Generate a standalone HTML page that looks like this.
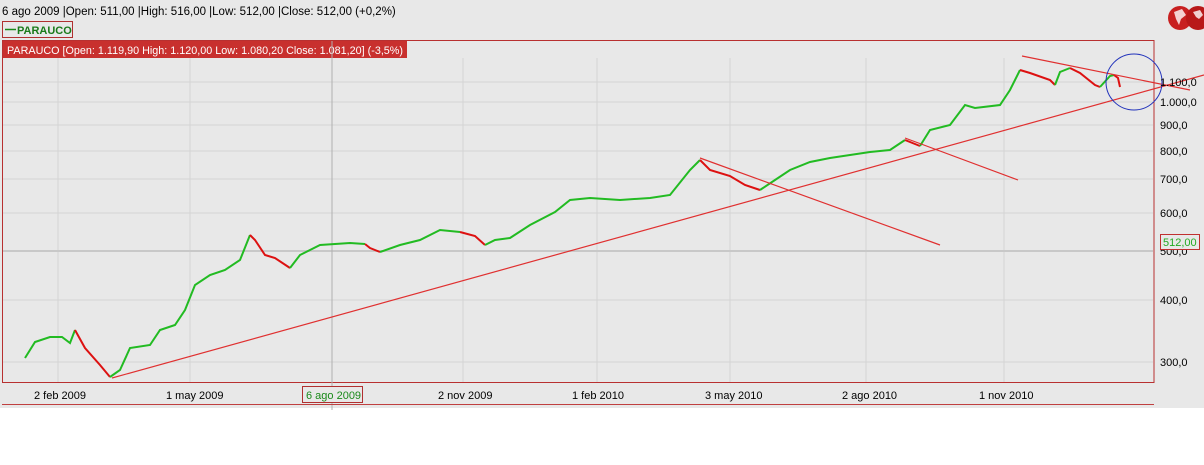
<!DOCTYPE html>
<html><head><style>
body{margin:0;width:1204px;height:460px;background:#fff;overflow:hidden;font-family:"Liberation Sans",sans-serif;}
</style></head><body>
<svg width="1204" height="460" xmlns="http://www.w3.org/2000/svg" font-family="Liberation Sans, sans-serif">
<rect x="0" y="0" width="1204" height="408" fill="#e8e8e8"/>
<text x="2" y="15" font-size="11.5" fill="#000">6 ago 2009 |Open: 511,00 |High: 516,00 |Low: 512,00 |Close: 512,00 (+0,2%)</text>
<rect x="2.5" y="21.5" width="70" height="16" fill="#e8e8e8" stroke="#b03030"/>
<line x1="5" y1="29.5" x2="16" y2="29.5" stroke="#1a8a1a" stroke-width="1.5"/>
<text x="17" y="34" font-size="11" font-weight="bold" fill="#1a7a1a">PARAUCO</text>
<rect x="2.5" y="40.5" width="1151.5" height="342" fill="#e8e8e8" stroke="#b83030"/>
<rect x="3" y="41" width="404" height="17" fill="#c8302e"/>
<text x="7" y="54" font-size="11" fill="#fff" textLength="396" lengthAdjust="spacingAndGlyphs">PARAUCO [Open: 1.119,90  High: 1.120,00  Low: 1.080,20  Close: 1.081,20] (-3,5%)</text>
<g stroke="#d4d4d4" stroke-width="1">
<line x1="58" y1="58" x2="58" y2="382"/><line x1="190" y1="58" x2="190" y2="382"/>
<line x1="463" y1="58" x2="463" y2="382"/><line x1="597" y1="58" x2="597" y2="382"/>
<line x1="730" y1="58" x2="730" y2="382"/><line x1="866" y1="58" x2="866" y2="382"/>
<line x1="1004" y1="58" x2="1004" y2="382"/>
<line x1="3" y1="82" x2="1153" y2="82"/><line x1="3" y1="102" x2="1153" y2="102"/>
<line x1="3" y1="125" x2="1153" y2="125"/><line x1="3" y1="151" x2="1153" y2="151"/>
<line x1="3" y1="179" x2="1153" y2="179"/><line x1="3" y1="213" x2="1153" y2="213"/>
<line x1="3" y1="300" x2="1153" y2="300"/><line x1="3" y1="362" x2="1153" y2="362"/>
</g>
<line x1="3" y1="251" x2="1153" y2="251" stroke="#c8c8c8" stroke-width="2"/>
<line x1="332" y1="41" x2="332" y2="410" stroke="#b0b0b0"/>
<g fill="none" stroke-width="2">
<polyline stroke="#22bb22" points="25,358 35,342 50,337 62,337 70,343 75,330"/>
<polyline stroke="#dd1111" points="75,330 85,348 100,365 110,377"/>
<polyline stroke="#22bb22" points="110,377 120,370 130,348 150,345 160,330 175,325 185,310 195,285 210,275 225,270 240,260 250,235"/>
<polyline stroke="#dd1111" points="250,235 255,240 265,255 275,258 290,268"/>
<polyline stroke="#22bb22" points="290,268 300,255 320,245 350,243 365,244"/>
<polyline stroke="#dd1111" points="365,244 370,248 380,252"/>
<polyline stroke="#22bb22" points="380,252 400,245 420,240 440,230 460,232"/>
<polyline stroke="#dd1111" points="460,232 475,236 485,245"/>
<polyline stroke="#22bb22" points="485,245 495,240 510,238 530,225 555,212 570,200 590,198 620,200 650,198 670,195 690,170 700,160"/>
<polyline stroke="#dd1111" points="700,160 710,170 730,176 745,185 760,190"/>
<polyline stroke="#22bb22" points="760,190 775,180 790,170 810,162 830,158 850,155 870,152 890,150 905,140"/>
<polyline stroke="#dd1111" points="905,140 920,146"/>
<polyline stroke="#22bb22" points="920,146 930,130 950,125 965,105 975,108 1000,105 1010,90 1020,70"/>
<polyline stroke="#dd1111" points="1020,70 1030,73 1050,80 1055,85"/>
<polyline stroke="#22bb22" points="1055,85 1060,72 1070,68"/>
<polyline stroke="#dd1111" points="1070,68 1080,73 1095,85 1100,87"/>
<polyline stroke="#22bb22" points="1100,87 1110,76 1114,75"/>
<polyline stroke="#dd1111" points="1114,75 1118,78 1120,87"/>
</g>
<g stroke="#e03030" stroke-width="1.2">
<line x1="112" y1="378" x2="1204" y2="75"/>
<line x1="1022" y1="56" x2="1190" y2="90"/>
<line x1="700" y1="158" x2="940" y2="245"/>
<line x1="905" y1="138" x2="1018" y2="180"/>
</g>
<circle cx="1134" cy="82" r="28" fill="none" stroke="#2233bb" stroke-width="1"/>
<g font-size="11" fill="#000">
<text x="1160" y="86">1.100,0</text><text x="1160" y="106">1.000,0</text>
<text x="1160" y="129">900,0</text><text x="1160" y="155">800,0</text>
<text x="1160" y="183">700,0</text><text x="1160" y="217">600,0</text>
<text x="1160" y="255">500,0</text><text x="1160" y="304">400,0</text>
<text x="1160" y="366">300,0</text>
<text x="34" y="399">2 feb 2009</text><text x="166" y="399">1 may 2009</text>
<text x="438" y="399">2 nov 2009</text><text x="572" y="399">1 feb 2010</text>
<text x="705" y="399">3 may 2010</text><text x="842" y="399">2 ago 2010</text>
<text x="979" y="399">1 nov 2010</text>
</g>
<rect x="1160.5" y="234.5" width="39" height="15" fill="#e8e8e8" stroke="#c03030"/>
<text x="1163" y="246" font-size="11" fill="#22aa22">512,00</text>
<rect x="302.5" y="386.5" width="60" height="16" fill="#e8e8e8" stroke="#b03030"/>
<text x="306" y="399" font-size="11" fill="#1a8a1a">6 ago 2009</text>
<line x1="2" y1="404.5" x2="1154" y2="404.5" stroke="#c04040"/>
<circle cx="1180" cy="18" r="12" fill="#c82020"/>
<circle cx="1198" cy="18" r="12" fill="#b81818"/>
<path d="M1174 12 l8 -3 l4 6 l-5 4 l-2 6 l-3 -6z" fill="#fff" opacity="0.8"/>
<path d="M1193 12 l7 -2 l3 5 l-4 4 l-3 -2z" fill="#fff" opacity="0.8"/>
</svg>
</body></html>
